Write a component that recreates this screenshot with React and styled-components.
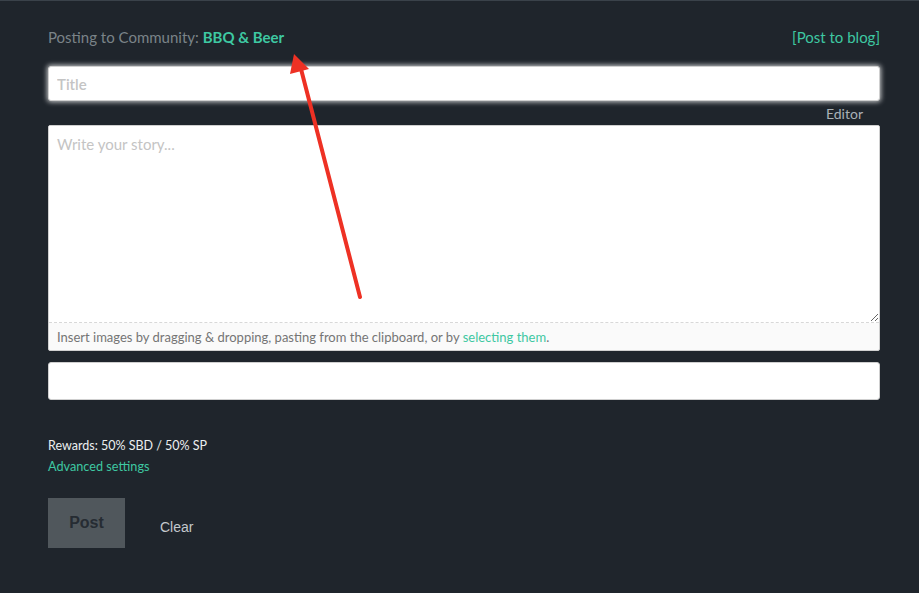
import React from "react";
import styled, { createGlobalStyle } from "styled-components";

const Global = createGlobalStyle`
  html, body { margin: 0; padding: 0; background: #1f252c; }
  body { font-family: "Lato", "Noto Sans", sans-serif; }
  * { box-sizing: border-box; }
`;

const Page = styled.div`
  position: relative;
  min-height: 593px;
  background: #1f252c;
  border-top: 1px solid #3a424a;
  padding: 22px 39px 0 48px;
`;

const Header = styled.div`
  display: flex;
  justify-content: space-between;
  align-items: center;
  height: 28px;
  font-size: 15px;
`;

const Muted = styled.span`
  color: #7a8388;
`;

const Strong = styled.a`
  color: #3ec8a2;
  font-weight: 700;
  text-decoration: none;
`;

const Link = styled.a`
  color: #3ec8a2;
  text-decoration: none;
  font-size: ${(p) => p.$size || 15}px;
`;

const Input = styled.input`
  display: block;
  width: 100%;
  height: ${(p) => p.$h}px;
  margin-top: ${(p) => p.$mt}px;
  border: 1px solid #cfcfcf;
  border-radius: 3px;
  background: #fff;
  padding: 0 8px;
  font-family: inherit;
  font-size: 15px;
  outline: none;
  box-shadow: ${(p) => (p.$focus ? "0 0 5px 1px rgba(255,255,255,0.75)" : "none")};
  &::placeholder { color: #c4c4c4; font-weight: 600; }
`;

const EditorLabel = styled.div`
  height: 24px;
  display: flex;
  align-items: center;
  justify-content: flex-end;
  padding-right: 17px;
  font-size: 14px;
  color: #a9b1b6;
`;

const EditorBox = styled.div`
  border: 1px solid #d0d0d0;
  border-radius: 2px;
  background: #fafafa;
  overflow: hidden;
`;

const TextArea = styled.textarea`
  display: block;
  width: 100%;
  height: 197px;
  border: none;
  border-bottom: 1px dashed #d8d8d8;
  background: #fff;
  padding: 9px 8px;
  font-family: inherit;
  font-size: 15px;
  resize: vertical;
  outline: none;
  &::placeholder { color: #c4c4c4; }
`;

const DropHint = styled.div`
  height: 27px;
  display: flex;
  align-items: center;
  padding-left: 8px;
  font-size: 13px;
  color: #757575;
`;

const Rewards = styled.div`
  margin-top: 38px;
  font-size: 12.5px;
  color: #eceff0;
  line-height: 16px;
`;

const Advanced = styled.div`
  margin-top: 3px;
  line-height: 16px;
`;

const Actions = styled.div`
  display: flex;
  align-items: center;
  gap: 35px;
  margin-top: 24px;
`;

const PostButton = styled.button`
  width: 77px;
  height: 50px;
  border: none;
  background: #50575c;
  color: #262c33;
  font-family: "Liberation Sans", Arial, sans-serif;
  font-weight: 700;
  font-size: 16px;
  padding: 0;
`;

const ClearButton = styled.button`
  border: none;
  background: transparent;
  color: #c3c8cc;
  font-family: "Liberation Sans", Arial, sans-serif;
  font-size: 14px;
  padding: 0;
  margin-top: 8px;
`;

const Arrow = styled.svg`
  position: absolute;
  left: 0;
  top: 0;
  pointer-events: none;
`;

export default function App() {
  return (
    <>
      <Global />
      <Page>
        <Header>
          <div>
            <Muted>Posting to Community: </Muted>
            <Strong href="#">BBQ &amp; Beer</Strong>
          </div>
          <Link href="#">[Post to blog]</Link>
        </Header>
        <Input $h={35} $mt={15} $focus placeholder="Title" />
        <EditorLabel>Editor</EditorLabel>
        <EditorBox>
          <TextArea placeholder="Write your story..." />
          <DropHint>
            Insert images by dragging &amp; dropping, pasting from the clipboard, or by&nbsp;
            <Link href="#" $size={13}>selecting them</Link>.
          </DropHint>
        </EditorBox>
        <Input $h={38} $mt={11} />
        <Rewards>Rewards: 50% SBD / 50% SP</Rewards>
        <Advanced>
          <Link href="#" $size={12.7}>Advanced settings</Link>
        </Advanced>
        <Actions>
          <PostButton>Post</PostButton>
          <ClearButton>Clear</ClearButton>
        </Actions>
        <Arrow width="919" height="593" viewBox="0 0 919 593">
          <line x1="360" y1="296" x2="301" y2="68" stroke="#ee3124" strokeWidth="4" strokeLinecap="round" />
          <polygon points="294,53 290,73 309,68" fill="#ee3124" />
        </Arrow>
      </Page>
    </>
  );
}
